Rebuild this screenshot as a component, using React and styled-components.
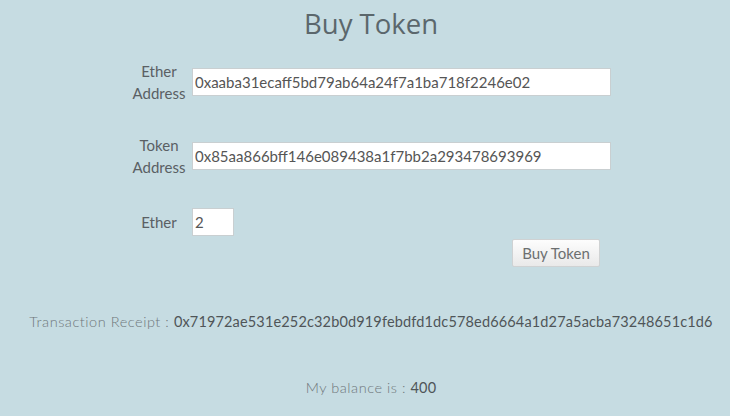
import React from 'react'
import styled, { createGlobalStyle } from 'styled-components'

const GlobalStyle = createGlobalStyle`
    html, body {
        margin: 0;
        padding: 0;
        background-color: #c6dce2;
        font-family: Lato, "Open Sans", sans-serif;
    }
`

const Page = styled.div`
    box-sizing: border-box;
    width: 730px;
    height: 416px;
    padding-left: 12px;
    overflow: hidden;
    color: #555d60;
`

const Title = styled.h1`
    margin: 0;
    padding-top: 4px;
    height: 46px;
    text-align: center;
    font-family: "Open Sans", sans-serif;
    font-weight: 400;
    font-size: 27.5px;
    line-height: 40px;
    color: #5b676c;
`

const Form = styled.div`
    padding-left: 118px;
    margin-top: 10px;
`

const Row = styled.div`
    display: flex;
    align-items: center;
    gap: 4px;
    margin-bottom: ${p => p.$gap}px;
`

const Label = styled.label`
    width: 58px;
    text-align: center;
    font-size: 15px;
    line-height: 22px;
    color: #5a6064;
`

const Field = styled.input`
    box-sizing: border-box;
    width: ${p => p.$width}px;
    height: 28px;
    padding: 0 2px;
    border: 1px solid #c9cfd1;
    background: #fff;
    font-family: Lato, sans-serif;
    font-size: 15px;
    color: #555;
    outline: none;
`

const ButtonRow = styled.div`
    display: flex;
    justify-content: flex-end;
    width: 470px;
    margin-top: 3px;
`

const BuyButton = styled.button`
    box-sizing: border-box;
    width: 88px;
    height: 28px;
    padding: 0;
    border: 1px solid #cfd2d3;
    border-radius: 2px;
    background: linear-gradient(#fdfdfd, #e9e9e9);
    font-family: Lato, sans-serif;
    font-size: 15px;
    color: #6c6f70;
`

const Info = styled.p`
    margin: ${p => p.$top}px 0 0;
    text-align: center;
    font-size: 14.5px;
    line-height: 20px;
    font-weight: 300;
    letter-spacing: 0.55px;
    color: #6f777b;
    white-space: nowrap;

    strong {
        font-weight: 400;
        letter-spacing: 0.15px;
        color: #4f5558;
    }
`

export default function App() {
    return (
        <Page>
            <GlobalStyle />
            <Title>Buy Token</Title>
            <Form>
                <Row $gap={30}>
                    <Label>Ether Address</Label>
                    <Field $width={419} defaultValue="0xaaba31ecaff5bd79ab64a24f7a1ba718f2246e02" />
                </Row>
                <Row $gap={30}>
                    <Label>Token Address</Label>
                    <Field $width={419} defaultValue="0x85aa866bff146e089438a1f7bb2a293478693969" />
                </Row>
                <Row $gap={0}>
                    <Label>Ether</Label>
                    <Field $width={42} defaultValue="2" />
                </Row>
                <ButtonRow>
                    <BuyButton>Buy Token</BuyButton>
                </ButtonRow>
            </Form>
            <Info $top={45}>
                Transaction Receipt : <strong>0x71972ae531e252c32b0d919febdfd1dc578ed6664a1d27a5acba73248651c1d6</strong>
            </Info>
            <Info $top={46}>
                My balance is : <strong>400</strong>
            </Info>
        </Page>
    )
}
